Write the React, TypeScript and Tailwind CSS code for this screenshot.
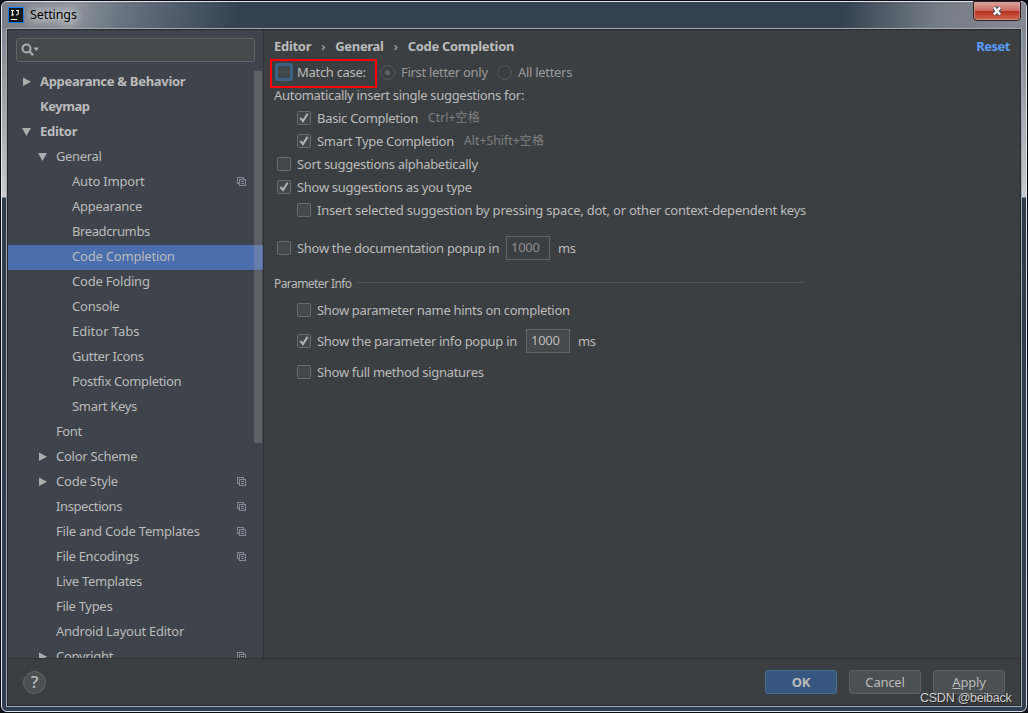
import type { ReactNode } from 'react';
import clsx from 'clsx';

type Node = {
  label: string;
  level: 0 | 1 | 2;
  arrow?: 'open' | 'closed';
  project?: boolean;
  selected?: boolean;
  tracking?: string;
};

const tree: Node[] = [
  { label: 'Appearance & Behavior', level: 0, arrow: 'closed', tracking: 'tracking-[-0.3px]' },
  { label: 'Keymap', level: 0, tracking: 'tracking-[-0.45px]' },
  { label: 'Editor', level: 0, arrow: 'open', tracking: 'tracking-[-0.3px]' },
  { label: 'General', level: 1, arrow: 'open', tracking: 'tracking-[-0.35px]' },
  { label: 'Auto Import', level: 2, project: true },
  { label: 'Appearance', level: 2, tracking: 'tracking-[-0.3px]' },
  { label: 'Breadcrumbs', level: 2, tracking: 'tracking-[-0.4px]' },
  { label: 'Code Completion', level: 2, selected: true },
  { label: 'Code Folding', level: 2 },
  { label: 'Console', level: 2 },
  { label: 'Editor Tabs', level: 2, tracking: 'tracking-normal' },
  { label: 'Gutter Icons', level: 2, tracking: 'tracking-[-0.35px]' },
  { label: 'Postfix Completion', level: 2, tracking: 'tracking-[-0.35px]' },
  { label: 'Smart Keys', level: 2, tracking: 'tracking-[-0.3px]' },
  { label: 'Font', level: 1, tracking: 'tracking-[-0.4px]' },
  { label: 'Color Scheme', level: 1, arrow: 'closed', tracking: 'tracking-[-0.25px]' },
  { label: 'Code Style', level: 1, arrow: 'closed' , project: true },
  { label: 'Inspections', level: 1, project: true, tracking: 'tracking-[-0.4px]' },
  { label: 'File and Code Templates', level: 1, project: true },
  { label: 'File Encodings', level: 1, project: true, tracking: 'tracking-[-0.3px]' },
  { label: 'Live Templates', level: 1, tracking: 'tracking-[-0.3px]' },
  { label: 'File Types', level: 1, tracking: 'tracking-[-0.3px]' },
  { label: 'Android Layout Editor', level: 1, tracking: 'tracking-[-0.25px]' },
  { label: 'Copyright', level: 1, arrow: 'closed', project: true, tracking: 'tracking-[-0.3px]' },
];

const indent = ['pl-[14px]', 'pl-[30px]', 'pl-[46px]'];

function Arrow({ kind }: { kind?: 'open' | 'closed' }) {
  return (
    <svg width="10" height="10" viewBox="0 0 10 10" className="-mt-px mr-2 shrink-0" fill="#adadad">
      {kind === 'closed' && <path d="M1 0.5 L9 4.7 L1 9 Z" />}
      {kind === 'open' && <path d="M0 1 H9 L4.5 9 Z" />}
    </svg>
  );
}

function ProjectIcon() {
  return (
    <svg width="9" height="9" viewBox="0 0 9 9" className="-mt-0.5 mr-[17px] shrink-0" fill="none" stroke="#858b94" shapeRendering="crispEdges">
      <path d="M2 6.5 H0.5 V0.5 H6.5 V2" />
      <rect x="2.5" y="2.5" width="6" height="6" />
      <path d="M4 4.5 H7 M4 6.5 H7" />
    </svg>
  );
}

function TreeRow({ node }: { node: Node }) {
  return (
    <div
      className={clsx(
        'flex h-[25px] shrink-0 items-center',
        indent[node.level],
        node.level === 0 && 'font-bold',
        node.selected && 'bg-[#4b6eaf]',
      )}
    >
      <Arrow kind={node.arrow} />
      <span className={clsx('-mt-[3px] flex-1 whitespace-pre', node.tracking ?? 'tracking-[-0.2px]')}>{node.label}</span>
      {node.project && <ProjectIcon />}
    </div>
  );
}

function CheckBox({ checked }: { checked?: boolean }) {
  return (
    <svg width="14" height="14" viewBox="0 0 14 14" className="-mt-px shrink-0">
      <rect x="0.5" y="0.5" width="13" height="13" rx="1" fill="#43494a" stroke="#6b6b6b" />
      {checked && <path d="M3.3 7 L6 10 L10.6 2.8" fill="none" stroke="#b4b4b4" strokeWidth="2" />}
    </svg>
  );
}

type OptionProps = { checked?: boolean; children: ReactNode; hint?: string; className?: string };

function Option({ checked, children, hint, className }: OptionProps) {
  return (
    <div className={clsx('flex h-[23px] items-center', className)}>
      <CheckBox checked={checked} />
      <span className="-mt-0.5 ml-1.5 whitespace-pre">{children}</span>
      {hint && <span className="-mt-0.5 ml-2.5 whitespace-pre text-[12px] tracking-[0.15px] text-[#808080]">{hint}</span>}
    </div>
  );
}

function Radio({ on }: { on?: boolean }) {
  return (
    <svg width="15" height="15" viewBox="0 0 15 15" className="mr-1.5 shrink-0">
      <circle cx="7.5" cy="7.5" r="7" fill="none" stroke="#565859" />
      {on && <circle cx="7.5" cy="7.5" r="2.5" fill="#606263" />}
    </svg>
  );
}

function Sidebar() {
  return (
    <div className="relative flex w-[255px] shrink-0 flex-col overflow-hidden bg-[#3f434c]">
      <div className="mt-2 ml-2 flex h-6 w-[239px] shrink-0 items-center rounded-[3px] border border-[#646464] bg-[#45494a] pl-1">
        <svg width="19" height="14" viewBox="0 0 19 14" fill="none" stroke="#adadad">
          <circle cx="5.5" cy="5.5" r="4" strokeWidth="2" />
          <path d="M8.3 8.3 L12 12.3" strokeWidth="2.4" />
          <path d="M12.5 4.5 H18 L15.2 8 Z" fill="#adadad" stroke="none" />
        </svg>
      </div>
      <div className="mt-2 flex min-h-0 flex-1 flex-col overflow-hidden">
        {tree.map((node) => (
          <TreeRow key={node.label + node.level} node={node} />
        ))}
      </div>
      {/* overlay scrollbar thumb */}
      <div className="absolute top-[41px] right-px h-[372px] w-2 bg-[#a6a6a6]/30" />
    </div>
  );
}

function Content() {
  return (
    <div className="flex min-w-0 flex-1 flex-col border-l border-[#323232] pl-[10px] tracking-[-0.3px]">
      <div className="flex h-[31px] items-center font-bold">
        <span>Editor</span>
        <span className="w-6 text-center font-normal">›</span>
        <span>General</span>
        <span className="w-6 text-center font-normal">›</span>
        <span>Code Completion</span>
        <span className="mr-[10px] ml-auto tracking-[-0.5px] text-[#589df6]">Reset</span>
      </div>
      <div className="-mt-[2px] flex h-[29px] items-center">
        <div className="-ml-1 flex h-[29px] w-[107px] items-center border-2 border-[#ff0000] pl-[3px]">
          <span className="-mt-[3px] h-[18px] w-[18px] shrink-0 rounded-[3px] border-[3px] border-[#3d6185] bg-[#43494a]" />
          <span className="-mt-1 ml-1 whitespace-pre">Match case:</span>
        </div>
        <div className="-mt-0.5 ml-[3px] flex items-center text-[#999999]">
          <Radio on />
          <span className="-mt-0.5 w-24">First letter only</span>
          <Radio />
          <span className="-mt-0.5">All letters</span>
        </div>
      </div>
      <div className="-mt-1 flex h-[23px] items-center">
        <span className="-mt-0.5 whitespace-pre">Automatically insert single suggestions for:</span>
      </div>
      <Option checked hint="Ctrl+空格" className="ml-[23px]">Basic Completion</Option>
      <Option checked hint="Alt+Shift+空格" className="ml-[23px]">Smart Type Completion</Option>
      <Option className="ml-[3px]">Sort suggestions alphabetically</Option>
      <Option checked className="ml-[3px]">Show suggestions as you type</Option>
      <Option className="ml-[23px] tracking-[-0.22px]">
        Insert selected suggestion by pressing space, dot, or other context-dependent keys
      </Option>
      <div className="mt-[14px] flex h-6 items-center">
        <Option className="mt-px ml-[3px] w-[229px]">Show the documentation popup in</Option>
        <span className="flex h-6 w-11 items-center border border-[#646464] pb-0.5 pl-1 text-[#8c8c8c]">1000</span>
        <span className="ml-2">ms</span>
      </div>
      <div className="mt-3 flex h-[23px] items-center text-[12px]">
        <span className="w-[77px] whitespace-pre tracking-[-0.57px]">Parameter Info</span>
        <span className="-mt-[3px] ml-[6px] h-px w-[447px] bg-[#515151]" />
      </div>
      <Option className="mt-1 ml-[23px]">Show parameter name hints on completion</Option>
      <div className="mt-[7px] flex h-6 items-center">
        <Option checked className="mt-px ml-[23px] w-[229px]">Show the parameter info popup in</Option>
        <span className="flex h-6 w-11 items-center border border-[#646464] bg-[#45494a] pb-0.5 pl-1">1000</span>
        <span className="ml-2">ms</span>
      </div>
      <Option className="mt-[8px] ml-[23px]">Show full method signatures</Option>
    </div>
  );
}

function TitleBar() {
  return (
    <div className="flex h-[26px] shrink-0 items-start justify-between">
      <div className="flex items-center pt-[5px] pl-[6px]">
        <svg width="16" height="16" viewBox="0 0 16 16">
          <rect x="0.5" y="0.5" width="15" height="15" fill="#151515" stroke="#147bf0" />
          <path d="M3 3.5 H6 M4.5 3.5 V8 M3 8 H6 M8 3.5 H11 M10.2 3.5 V7 Q10 8 8 8 M3 12.5 H9" fill="none" stroke="#fff" strokeWidth="1.1" />
        </svg>
        <span className="ml-[6px] text-[12.5px] leading-4 tracking-[-0.1px] text-black [text-shadow:0_0_8px_#fff,0_0_12px_#fff]">Settings</span>
      </div>
      <div className="-mt-px mr-[5px] flex h-5 w-12 items-center justify-center rounded-b-[4px] border border-[#401c1d] bg-[linear-gradient(180deg,#e0a39c_0,#cb6a60_48%,#b52e1c_50%,#d06a50_100%)] ring-1 ring-[#b4a9ae]/60 ring-inset">
        <svg width="12" height="10" viewBox="0 0 12 10" fill="none">
          <path d="M3 1.5 L9 8.5 M9 1.5 L3 8.5" stroke="#4b5060" strokeWidth="4.5" />
          <path d="M3 1.5 L9 8.5 M9 1.5 L3 8.5" stroke="#fff" strokeWidth="2.5" />
        </svg>
      </div>
    </div>
  );
}

export default function App() {
  return (
    <div className="relative h-[713px] w-[1028px] overflow-hidden bg-[#0b0e15] p-px font-['Noto_Sans','Noto_Sans_CJK_SC',sans-serif] text-[13px] leading-4 text-[#bbbbbb]">
      <div className="flex h-[711px] flex-col rounded-[6px] border border-[#dfe4ec] bg-[linear-gradient(180deg,#7a818b_0,#8e939a_60px,#c8cbd0_195px,#2f3d4b_196px,#303e50_100%)]">
        <div className="h-[26px] shrink-0 rounded-t-[5px] bg-[linear-gradient(100deg,#777e88_0,#8e949c_70px,#687480_120px,#34424f_235px,#34424f_830px,#737b85_920px,#858b94_100%)]">
          <TitleBar />
        </div>
        <div className="mx-1 mb-1 flex min-h-0 flex-1 flex-col border border-[#9eabb2]">
          <div className="flex min-h-0 flex-1 flex-col border border-[#25292c] bg-[#3c3f41]">
            <div className="flex h-[628px] shrink-0">
              <Sidebar />
              <Content />
            </div>
            <div className="flex flex-1 items-center border-t border-[#323232] px-[15px]">
              <span className="flex h-[23px] w-[23px] items-center justify-center rounded-full border border-[#646566] bg-[#4c5052] text-[17px] font-medium">?</span>
              <div className="ml-auto flex gap-3 tracking-[-0.2px]">
                <button className="h-6 w-[72px] rounded-[3px] border border-[#4c708c] bg-[#365880] font-bold">OK</button>
                <button className="h-6 w-[72px] rounded-[3px] border border-[#5e6060] bg-[#4c5052]">Cancel</button>
                <button className="h-6 w-[72px] rounded-[3px] border border-[#5e6060] bg-[#4c5052]">
                  <span className="underline">A</span>pply
                </button>
              </div>
            </div>
          </div>
        </div>
      </div>
      {/* watermark */}
      <span className="absolute top-[690px] left-[920px] whitespace-pre font-['Liberation_Sans',sans-serif] text-[12.5px] tracking-[-0.25px] text-[#d0d0d0] [text-shadow:1px_1px_1px_#222]">
        CSDN @beiback
      </span>
    </div>
  );
}
